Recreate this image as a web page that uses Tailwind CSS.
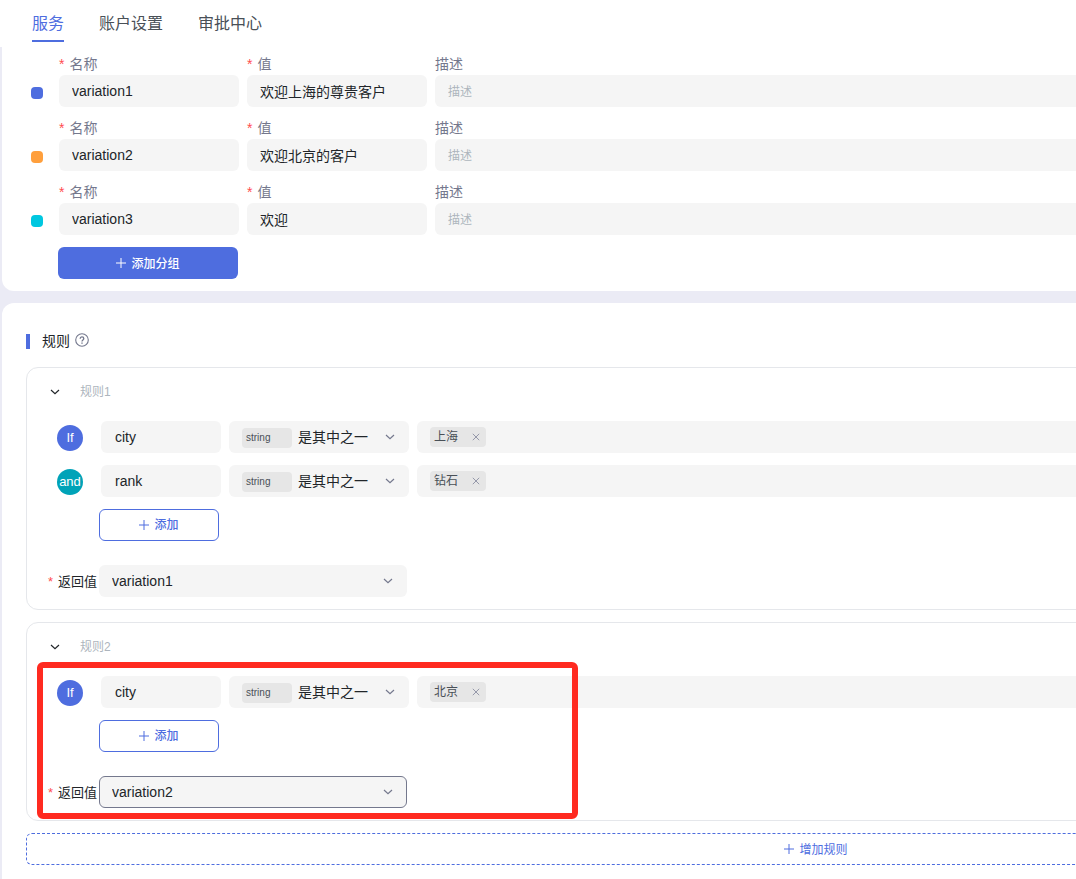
<!DOCTYPE html>
<html lang="zh-CN">
<head>
<meta charset="utf-8">
<meta name="viewport" content="width=device-width, initial-scale=1">
<title>规则</title>
<script src="https://cdn.jsdelivr.net/npm/@tailwindcss/browser@4"></script>
</head>
<body class="bg-[#ebebf5] font-['Liberation_Sans','Noto_Sans_CJK_SC',sans-serif] text-sm text-[#212529]">
<svg class="hidden" aria-hidden="true">
  <symbol id="chevron" viewBox="0 0 10 10"><path d="M1 3 5 6.6 9 3" fill="none" stroke="currentColor" stroke-width="1.2"/></symbol>
  <symbol id="plus" viewBox="0 0 10 10"><path d="M5 0v10M0 5h10" fill="none" stroke="currentColor" stroke-width="1"/></symbol>
  <symbol id="cross" viewBox="0 0 10 10"><path d="m1 1 8 8M9 1 1 9" fill="none" stroke="currentColor" stroke-width="1.1"/></symbol>
</svg>

<div class="min-h-screen overflow-x-clip">
<header class="h-[47px] bg-white">
  <nav class="flex gap-[35px] pl-8 text-base text-[#495057]">
    <a href="#" class="h-[42px] border-b-2 border-[#4e6ddf] pt-3 leading-6 text-[#4e6ddf]">服务</a>
    <a href="#" class="pt-3 leading-6">账户设置</a>
    <a href="#" class="pt-3 leading-6">审批中心</a>
  </nav>
</header>

<!-- The form is wider than the window and is clipped at the right edge. -->
<main class="flex w-[150%] flex-col gap-3 pl-0.5">
  <section class="rounded-b-xl bg-white pt-1.5 pr-2 pb-3 pl-[29px]">
    <div class="flex flex-col gap-2.5">
      <div class="flex gap-2">
        <span class="mt-[34px] mr-2 size-3 rounded bg-[#4e6ddf]"></span>
        <label class="flex w-[180px] flex-col"><span class="h-[22px] leading-[22px] text-[#74788d]"><span class="mr-[5px] text-[#ff4d4f]">*</span>名称</span>
          <input value="variation1" class="h-8 rounded-md bg-[#f5f5f5] px-[13px]"></label>
        <label class="flex w-[180px] flex-col"><span class="h-[22px] leading-[22px] text-[#74788d]"><span class="mr-[5px] text-[#ff4d4f]">*</span>值</span>
          <input value="欢迎上海的尊贵客户" class="h-8 rounded-md bg-[#f5f5f5] px-[13px]"></label>
        <label class="flex flex-1 flex-col"><span class="h-[22px] leading-[22px] text-[#74788d]">描述</span>
          <input placeholder="描述" class="h-8 rounded-md bg-[#f5f5f5] px-[13px] pt-0.5 text-xs placeholder:text-[#adb5bd]"></label>
      </div>
      <div class="flex gap-2">
        <span class="mt-[34px] mr-2 size-3 rounded bg-[#ff9f3c]"></span>
        <label class="flex w-[180px] flex-col"><span class="h-[22px] leading-[22px] text-[#74788d]"><span class="mr-[5px] text-[#ff4d4f]">*</span>名称</span>
          <input value="variation2" class="h-8 rounded-md bg-[#f5f5f5] px-[13px]"></label>
        <label class="flex w-[180px] flex-col"><span class="h-[22px] leading-[22px] text-[#74788d]"><span class="mr-[5px] text-[#ff4d4f]">*</span>值</span>
          <input value="欢迎北京的客户" class="h-8 rounded-md bg-[#f5f5f5] px-[13px]"></label>
        <label class="flex flex-1 flex-col"><span class="h-[22px] leading-[22px] text-[#74788d]">描述</span>
          <input placeholder="描述" class="h-8 rounded-md bg-[#f5f5f5] px-[13px] pt-0.5 text-xs placeholder:text-[#adb5bd]"></label>
      </div>
      <div class="flex gap-2">
        <span class="mt-[34px] mr-2 size-3 rounded bg-[#00c7e0]"></span>
        <label class="flex w-[180px] flex-col"><span class="h-[22px] leading-[22px] text-[#74788d]"><span class="mr-[5px] text-[#ff4d4f]">*</span>名称</span>
          <input value="variation3" class="h-8 rounded-md bg-[#f5f5f5] px-[13px]"></label>
        <label class="flex w-[180px] flex-col"><span class="h-[22px] leading-[22px] text-[#74788d]"><span class="mr-[5px] text-[#ff4d4f]">*</span>值</span>
          <input value="欢迎" class="h-8 rounded-md bg-[#f5f5f5] px-[13px]"></label>
        <label class="flex flex-1 flex-col"><span class="h-[22px] leading-[22px] text-[#74788d]">描述</span>
          <input placeholder="描述" class="h-8 rounded-md bg-[#f5f5f5] px-[13px] pt-0.5 text-xs placeholder:text-[#adb5bd]"></label>
      </div>
    </div>
    <button class="mt-3 ml-[27px] flex h-8 w-[180px] items-center justify-center gap-[5px] rounded-md bg-[#4e6ddf] text-xs font-medium text-white"><svg class="size-2.5"><use href="#plus"/></svg><span class="pt-0.5">添加分组</span></button>
  </section>

  <section class="rounded-t-xl bg-white pt-7 pr-2 pb-6 pl-6">
    <h2 class="mb-4 flex h-5 items-center">
      <span class="mr-3 h-[15px] w-1 bg-[#4e6ddf]"></span>规则
      <svg class="mb-0.5 ml-[5px] size-3.5 text-[#74788d]" viewBox="0 0 14 14" fill="none" stroke="currentColor"><circle cx="7" cy="7" r="6.3" stroke-width="1.1"/><path d="M5.2 5.7C5.2 4.6 6 3.9 7 3.9s1.8.7 1.8 1.7C8.8 6.8 7 7 7 8.4" stroke-width="1.3"/><path d="M7 9.4v1.3" stroke-width="1.4"/></svg>
    </h2>

    <div class="flex flex-col gap-3">
      <div class="rounded-xl border border-[#e5e7eb] px-5 pb-3">
        <div class="flex h-[47px] items-center gap-5 text-xs text-[#adb5bd]">
          <button aria-label="收起规则1" class="ml-[3px] text-[#212529]"><svg class="size-2.5"><use href="#chevron"/></svg></button>规则1
        </div>
        <div class="mt-1.5 flex flex-col gap-3 pl-2.5">
          <div class="flex items-center gap-2">
            <span class="mt-0.5 mr-2.5 flex size-[26px] items-center justify-center rounded-full bg-[#4e6ddf] text-[13px] text-white">If</span>
            <input aria-label="属性" value="city" class="h-8 w-[120px] rounded-md bg-[#f5f5f5] px-3.5">
            <div class="relative w-[180px]">
              <select aria-label="条件" class="h-8 w-full appearance-none rounded-md bg-[#f5f5f5] pl-[69px]"><option>是其中之一</option></select>
              <span class="pointer-events-none absolute top-[7px] left-[13px] h-5 w-[50px] rounded bg-[#e6e6e6] pl-1 text-[10px] leading-5 text-[#495057]">string</span>
              <svg class="pointer-events-none absolute top-[11px] right-3.5 size-2.5 text-[#74788d]"><use href="#chevron"/></svg>
            </div>
            <div class="flex h-8 flex-1 items-center rounded-md bg-[#f5f5f5] pl-[13px]">
              <span class="flex h-5 w-14 items-center justify-between rounded bg-[#e6e6e6] pr-1.5 pl-1 text-xs text-[#495057]">上海<button aria-label="移除上海" class="text-[#8a8da0]"><svg class="size-2"><use href="#cross"/></svg></button></span>
            </div>
          </div>
          <div class="flex items-center gap-2">
            <span class="mt-0.5 mr-2.5 flex size-[26px] items-center justify-center rounded-full bg-[#00a3b8] text-[13px] text-white">and</span>
            <input aria-label="属性" value="rank" class="h-8 w-[120px] rounded-md bg-[#f5f5f5] px-3.5">
            <div class="relative w-[180px]">
              <select aria-label="条件" class="h-8 w-full appearance-none rounded-md bg-[#f5f5f5] pl-[69px]"><option>是其中之一</option></select>
              <span class="pointer-events-none absolute top-[7px] left-[13px] h-5 w-[50px] rounded bg-[#e6e6e6] pl-1 text-[10px] leading-5 text-[#495057]">string</span>
              <svg class="pointer-events-none absolute top-[11px] right-3.5 size-2.5 text-[#74788d]"><use href="#chevron"/></svg>
            </div>
            <div class="flex h-8 flex-1 items-center rounded-md bg-[#f5f5f5] pl-[13px]">
              <span class="flex h-5 w-14 items-center justify-between rounded bg-[#e6e6e6] pr-1.5 pl-1 text-xs text-[#495057]">钻石<button aria-label="移除钻石" class="text-[#8a8da0]"><svg class="size-2"><use href="#cross"/></svg></button></span>
            </div>
          </div>
        </div>
        <button class="mt-3 ml-[52px] flex h-8 w-[120px] items-center justify-center gap-[5px] rounded-md border border-[#4e6ddf] text-xs font-medium text-[#4e6ddf]"><svg class="size-2.5"><use href="#plus"/></svg>添加</button>
        <div class="mt-6 flex items-center">
          <label for="return1" class="flex w-[52px] gap-[5px] pt-0.5 pl-px text-[13px]"><span class="text-[#ff4d4f]">*</span><span>返回值</span></label>
          <div class="relative w-[308px]">
            <select id="return1" class="h-8 w-full appearance-none rounded-md bg-[#f5f5f5] px-[13px]"><option>variation1</option></select>
            <svg class="pointer-events-none absolute top-[11px] right-3.5 size-2.5 text-[#74788d]"><use href="#chevron"/></svg>
          </div>
        </div>
      </div>

      <div class="relative rounded-xl border border-[#e5e7eb] px-5 pb-3">
        <div class="flex h-[47px] items-center gap-5 text-xs text-[#adb5bd]">
          <button aria-label="收起规则2" class="ml-[3px] text-[#212529]"><svg class="size-2.5"><use href="#chevron"/></svg></button>规则2
        </div>
        <div class="mt-1.5 flex items-center gap-2 pl-2.5">
          <span class="mt-0.5 mr-2.5 flex size-[26px] items-center justify-center rounded-full bg-[#4e6ddf] text-[13px] text-white">If</span>
          <input aria-label="属性" value="city" class="h-8 w-[120px] rounded-md bg-[#f5f5f5] px-3.5">
          <div class="relative w-[180px]">
            <select aria-label="条件" class="h-8 w-full appearance-none rounded-md bg-[#f5f5f5] pl-[69px]"><option>是其中之一</option></select>
            <span class="pointer-events-none absolute top-[7px] left-[13px] h-5 w-[50px] rounded bg-[#e6e6e6] pl-1 text-[10px] leading-5 text-[#495057]">string</span>
            <svg class="pointer-events-none absolute top-[11px] right-3.5 size-2.5 text-[#74788d]"><use href="#chevron"/></svg>
          </div>
          <div class="flex h-8 flex-1 items-center rounded-md bg-[#f5f5f5] pl-[13px]">
            <span class="flex h-5 w-14 items-center justify-between rounded bg-[#e6e6e6] pr-1.5 pl-1 text-xs text-[#495057]">北京<button aria-label="移除北京" class="text-[#8a8da0]"><svg class="size-2"><use href="#cross"/></svg></button></span>
          </div>
        </div>
        <button class="mt-3 ml-[52px] flex h-8 w-[120px] items-center justify-center gap-[5px] rounded-md border border-[#4e6ddf] text-xs font-medium text-[#4e6ddf]"><svg class="size-2.5"><use href="#plus"/></svg>添加</button>
        <div class="mt-6 flex items-center">
          <label for="return2" class="flex w-[52px] gap-[5px] pt-0.5 pl-px text-[13px]"><span class="text-[#ff4d4f]">*</span><span>返回值</span></label>
          <div class="relative w-[308px]">
            <select id="return2" class="h-8 w-full appearance-none rounded-md border border-[#74788d] bg-[#f5f5f5] px-3"><option>variation2</option></select>
            <svg class="pointer-events-none absolute top-[11px] right-3.5 size-2.5 text-[#74788d]"><use href="#chevron"/></svg>
          </div>
        </div>
        <!-- Highlight frame drawn over the rule -->
        <div class="pointer-events-none absolute top-[39px] bottom-px left-2.5 w-[541px] rounded-md border-6 border-[#ff2a20]"></div>
      </div>

      <button class="flex h-8 w-full items-center justify-center gap-[5px] rounded-md border border-dashed border-[#4e6ddf] text-xs text-[#4e6ddf]"><svg class="size-2.5"><use href="#plus"/></svg><span class="pt-0.5">增加规则</span></button>
    </div>
  </section>
</main>
</div>
</body>
</html>
